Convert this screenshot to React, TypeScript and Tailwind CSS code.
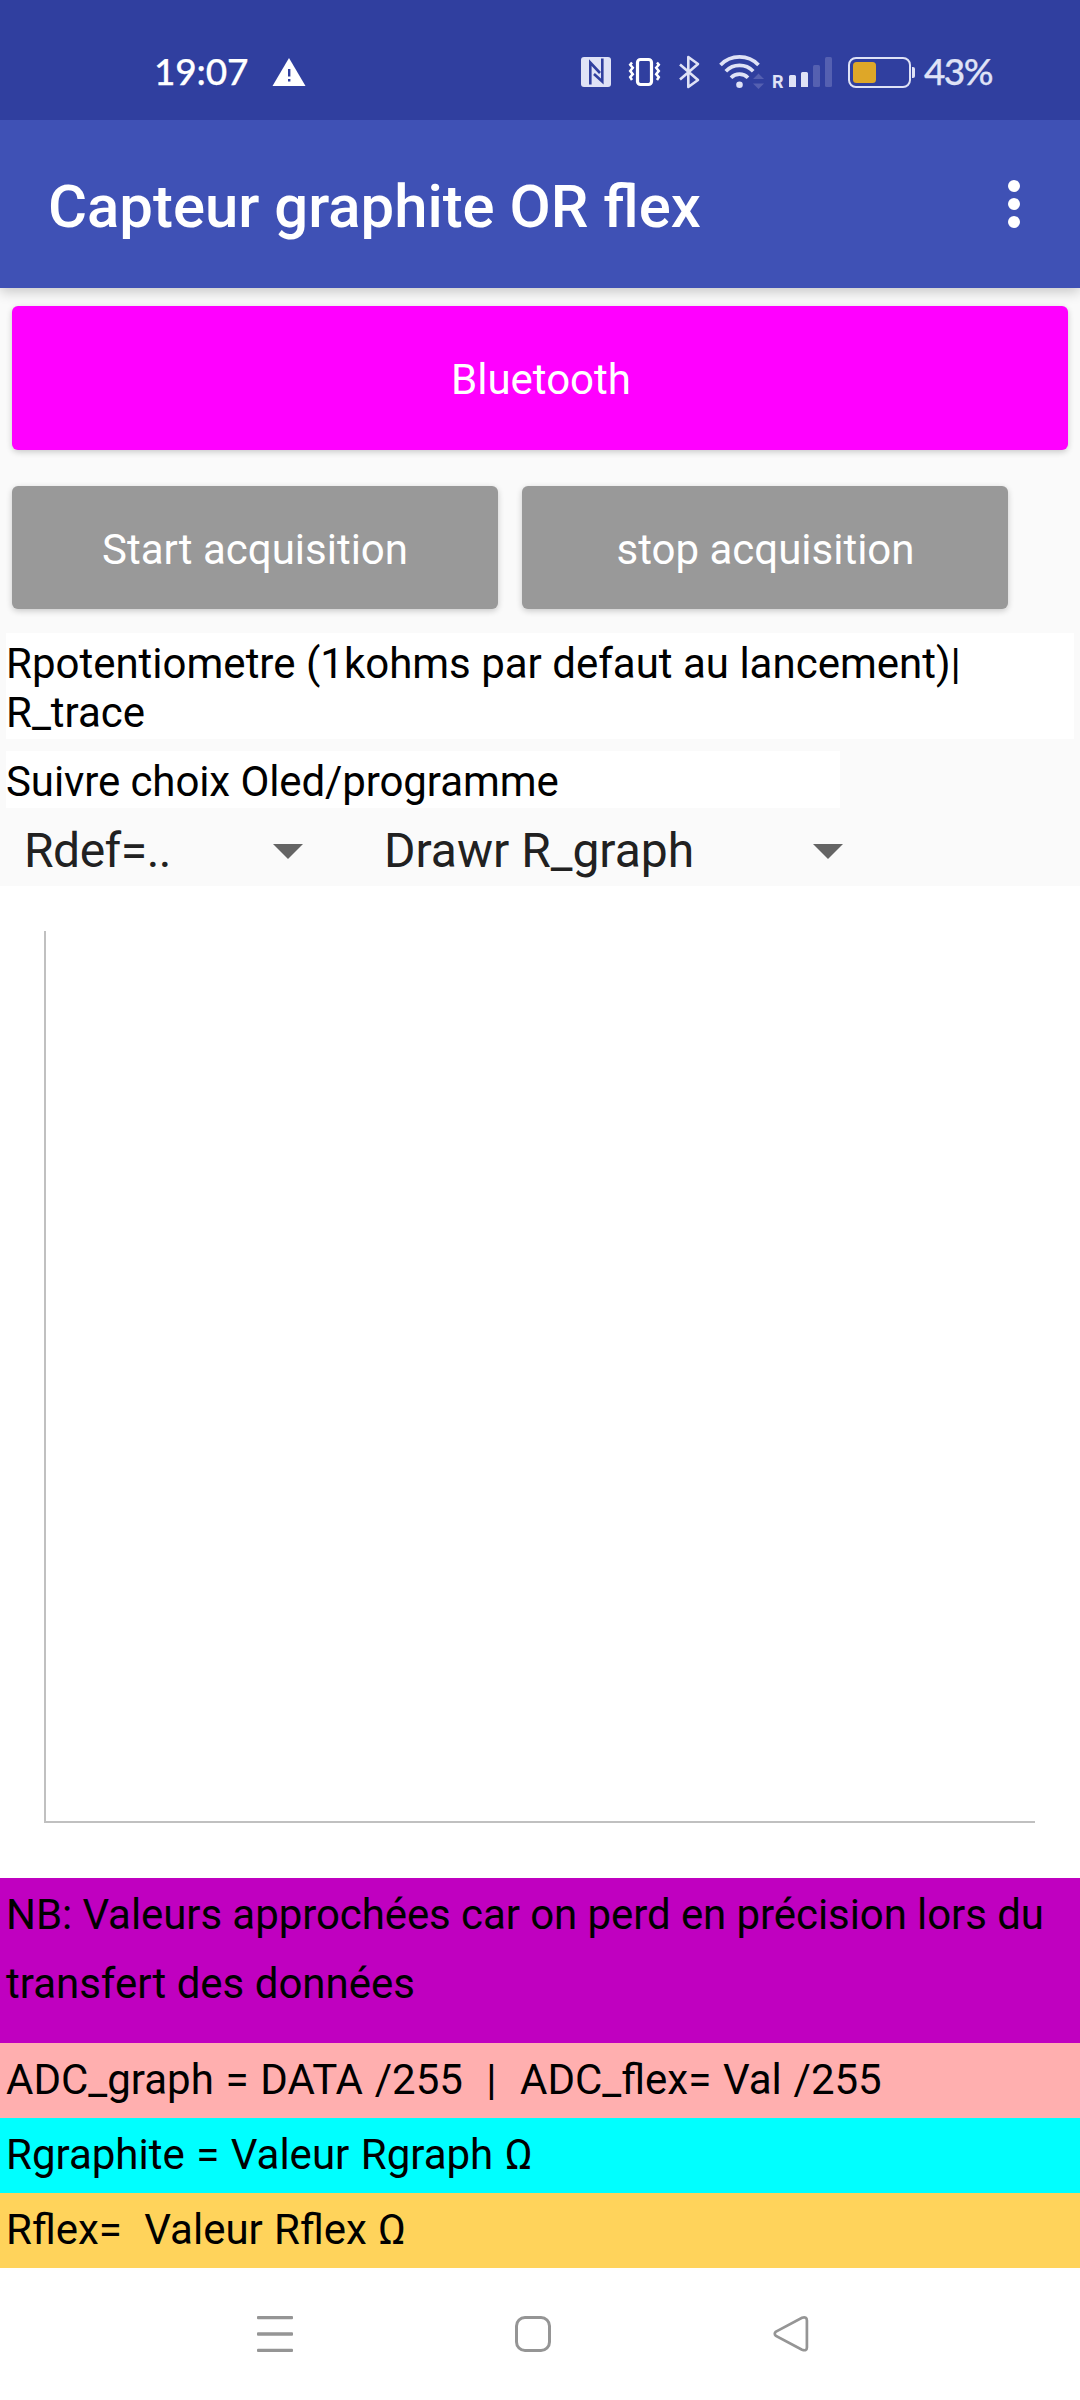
import type { ReactNode } from "react";

function StatusBar() {
  return (
    <div className="relative z-10 flex h-[120px] items-start bg-[#303f9f] pt-[52px] text-[#dfe2f6]">
      <span className="ml-[154px] mt-[-1px] w-[100px] whitespace-nowrap font-['Lato'] text-[37px] font-medium leading-[40px] tracking-[-0.2px] text-white [-webkit-text-stroke:0.25px]">
        19:07
      </span>
      <svg className="ml-[18px]" width="34" height="40" viewBox="272 52 34 40">
        <path d="M289 58L305.500 86H272.500Z" fill="#fff" />
        <path d="M288 69h2.400v7.500h-2.400zM288 79h2.400v2.400h-2.400z" fill="#303f9f" />
      </svg>
      {/* NFC */}
      <svg className="ml-[275px]" width="30" height="40" viewBox="581 52 30 40">
        <rect x="581" y="57" width="30" height="30" rx="3" fill="currentColor" />
        <path d="M590.300 84.500V62.500L600 73" fill="none" stroke="#303f9f" strokeWidth="2.600" />
        <path d="M602.300 58.500V81.500L594 74" fill="none" stroke="#303f9f" strokeWidth="2.600" />
      </svg>
      {/* Vibrate */}
      <svg className="ml-[17px]" width="34" height="40" viewBox="628 52 34 40" fill="none" stroke="#fff">
        <rect x="637.500" y="59.500" width="14" height="25" rx="3" strokeWidth="3.200" />
        <path d="M632 62.500l-1.800 2.200 2.600 3-2.600 3.200 2.600 3.200-2.600 3 1.800 2.900M657 62.500l1.800 2.200-2.600 3 2.600 3.200-2.600 3.200 2.600 3-1.800 2.900" strokeWidth="2.500" />
      </svg>
      {/* Bluetooth */}
      <svg className="ml-[16px]" width="22" height="40" viewBox="678 52 22 40" fill="none" stroke="currentColor" strokeWidth="2.600">
        <path d="M680 64.500L698 80L688.300 87V57L698 64L680 79.500" strokeLinejoin="round" />
      </svg>
      {/* Wi-Fi with data arrows */}
      <svg className="ml-[18px]" width="48" height="40" viewBox="718 52 48 40" fill="none" stroke="currentColor">
        <path d="M720.500 65a26.500 26.500 0 0 1 38 0" strokeWidth="3.700" />
        <path d="M725.800 71.200a19 19 0 0 1 27.400 0" strokeWidth="3.700" />
        <path d="M731 77.700a12 12 0 0 1 17 0" strokeWidth="3.700" />
        <circle cx="739.500" cy="84.700" r="3.300" fill="currentColor" stroke="none" />
        <path d="M753 79L758.500 73.500L764 79ZM753 83.500L758.500 89L764 83.500Z" fill="#5560b1" stroke="none" />
      </svg>
      <span className="ml-[6px] mt-[21px] w-[12px] font-['Roboto'] text-[18px] font-bold leading-[18px]">R</span>
      <svg className="ml-[5px]" width="44" height="40" viewBox="789 52 44 40">
        <path d="M790.500 75h4a1.500 1.500 0 0 1 1.500 1.500V87h-7V76.500a1.500 1.500 0 0 1 1.500-1.500zM801 73.500a1.500 1.500 0 0 1 1.500-1.500h4a1.500 1.500 0 0 1 1.500 1.500V87h-7z" fill="currentColor" />
        <rect x="813" y="65" width="7" height="22" rx="1.500" fill="#5560b1" />
        <rect x="825" y="57" width="7" height="30" rx="1.500" fill="#5560b1" />
      </svg>
      {/* Battery */}
      <svg className="ml-[15px]" width="68" height="40" viewBox="848 52 68 40">
        <rect x="849" y="58" width="61" height="29" rx="7" fill="none" stroke="currentColor" strokeWidth="2" />
        <rect x="853" y="62" width="23" height="21" rx="3.500" fill="#dea728" />
        <path d="M912 67h1a2 2 0 0 1 2 2v7a2 2 0 0 1-2 2h-1z" fill="currentColor" />
      </svg>
      <span className="ml-[8px] mt-[-1px] whitespace-nowrap font-['Lato'] text-[37px] font-medium leading-[40px] tracking-[-1.6px] [-webkit-text-stroke:0.25px]">
        43%
      </span>
    </div>
  );
}

function AppBar() {
  return (
    <div className="relative flex h-[168px] items-center justify-between bg-[#3f51b5] pl-[48px] pr-[60px] shadow-[0_4px_12px_rgba(0,0,0,0.2)]">
      <h1 className="pt-[5px] text-[59.85px] font-medium leading-[70px] text-white">Capteur graphite OR flex</h1>
      <div className="flex flex-col gap-[6px]">
        <i className="size-3 rounded-full bg-white" />
        <i className="size-3 rounded-full bg-white" />
        <i className="size-3 rounded-full bg-white" />
      </div>
    </div>
  );
}

function ActionButton({ className, children }: { className: string; children: ReactNode }) {
  return (
    <button
      className={`relative flex items-center justify-center rounded-[6px] pt-[3px] text-white shadow-[0_2px_6px_rgba(0,0,0,0.2)] ${className}`}
    >
      {children}
    </button>
  );
}

function Spinner({ className, label }: { className: string; label: string }) {
  return (
    <div className={`flex h-[78px] items-center justify-between pt-[6px] text-[48px] leading-[56px] text-[#212121] ${className}`}>
      <span className="pt-[2px]">{label}</span>
      <svg className="mt-[2px]" width="30" height="15" viewBox="0 0 30 15">
        <path d="M0 0H30L15 15Z" fill="#646464" />
      </svg>
    </div>
  );
}

function ValueRow({ className, children }: { className: string; children: ReactNode }) {
  return <div className={`h-[75px] whitespace-pre pl-[6px] pt-[12px] ${className}`}>{children}</div>;
}

function NavBar() {
  return (
    <div className="flex h-[132px] items-center bg-white text-[#959595]">
      <svg className="ml-[257px]" width="36" height="36" viewBox="0 0 36 36" fill="currentColor">
        <rect width="36" height="3.200" rx="1" />
        <rect y="16.200" width="36" height="3.500" rx="1" />
        <rect y="32.800" width="36" height="3.200" rx="1" />
      </svg>
      <svg className="ml-[222px]" width="36" height="36" viewBox="0 0 36 36" fill="none" stroke="currentColor" strokeWidth="3">
        <rect x="1.500" y="1.500" width="33" height="33" rx="8.500" />
      </svg>
      <svg className="ml-[222px]" width="36" height="36" viewBox="773 2316 36 36" fill="none" stroke="currentColor" strokeWidth="2.700">
        <path d="M776 2331.600L802 2317.800Q806.900 2316.300 806.900 2320.500V2347.500Q806.900 2351.500 802 2349.700L776 2336Q773.500 2333.800 776 2331.600Z" />
      </svg>
    </div>
  );
}

export default function App() {
  return (
    <div className="flex h-[2400px] w-[1080px] flex-col overflow-hidden bg-[#fafafa] font-['Roboto',sans-serif] text-[42px] leading-[49px] text-black">
      <StatusBar />
      <AppBar />
      <div className="flex h-[598px] flex-col">
        <ActionButton className="mx-[12px] mt-[18px] h-[144px] bg-[#ff00ff] pl-[2px]">Bluetooth</ActionButton>
        <div className="mt-[36px] flex gap-[24px] pl-[12px]">
          <ActionButton className="h-[123px] w-[486px] bg-[#999999]">Start acquisition</ActionButton>
          <ActionButton className="h-[123px] w-[486px] bg-[#999999] pl-[1px]">stop acquisition</ActionButton>
        </div>
        <p className="mx-[6px] mt-[24px] h-[106px] bg-white pt-[6px]">
          Rpotentiometre (1kohms par defaut au lancement)|
          <br />
          R_trace
        </p>
        <p className="ml-[6px] mt-[12px] h-[57px] w-[834px] bg-white pt-[6px] tracking-[-0.1px]">
          Suivre choix Oled/programme
        </p>
        <div className="flex">
          <Spinner className="w-[303px] pl-[24px] tracking-[-0.5px]" label="Rdef=.." />
          <Spinner className="ml-[81px] w-[459px]" label="Drawr R_graph" />
        </div>
      </div>
      <div className="h-[992px] bg-white pl-[44px] pt-[45px]">
        <div className="h-[892px] w-[991px] border-b-2 border-l-2 border-[#c0c0c0]" />
      </div>
      <p className="h-[165px] whitespace-nowrap bg-[#c000c0] pl-[6px] pt-[2px] leading-[69px]">
        <span className="tracking-[-0.08px]">NB: Valeurs approchées car on perd en précision lors du</span>
        <br />
        transfert des données
      </p>
      <ValueRow className="bg-[#ffafaf] [word-spacing:1.3px]">{"ADC_graph = DATA /255  |  ADC_flex= Val /255"}</ValueRow>
      <ValueRow className="bg-[#00ffff] [word-spacing:1.1px]">Rgraphite = Valeur Rgraph Ω</ValueRow>
      <ValueRow className="bg-[#ffd35b] [word-spacing:0.8px]">{"Rflex=  Valeur Rflex Ω"}</ValueRow>
      <NavBar />
    </div>
  );
}
